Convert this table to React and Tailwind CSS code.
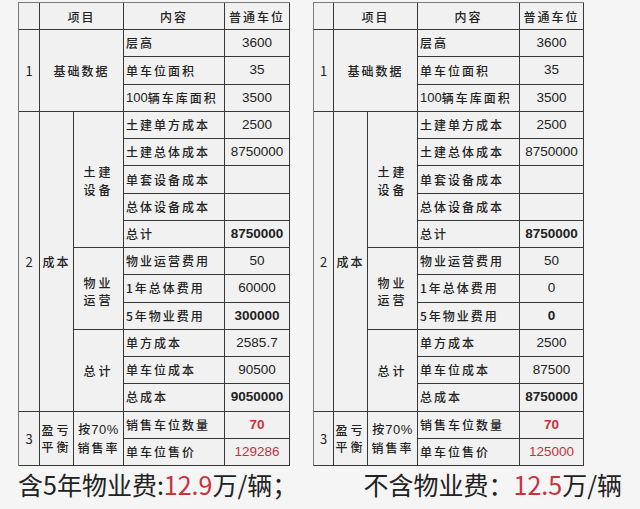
import React from "react";

const CJK = "font-['Noto_Sans_CJK_SC','Noto_Sans',sans-serif]";
const NUM = "font-['Liberation_Sans',Arial,sans-serif]";

function Cell({ children, className = "" }) {
  return (
    <div
      className={`border-r border-b border-[#383838] flex items-center overflow-hidden whitespace-nowrap ${className}`}
    >
      {children}
    </div>
  );
}

function Label({ text, className = "" }) {
  return (
    <Cell className={`pl-[2px] text-[12px] font-medium tracking-[2px] text-[#222] ${CJK} ${className}`}>
      {text}
    </Cell>
  );
}

function Val({ v, bold, red }) {
  return (
    <Cell
      className={`justify-center text-[13.5px] ${NUM} ${bold ? "font-bold" : ""} ${
        red ? "text-[#c92f3b]" : "text-[#222]"
      }`}
    >
      {v}
    </Cell>
  );
}

function Center({ children, className = "" }) {
  return (
    <Cell className={`justify-center text-[12px] font-medium text-[#222] leading-[17px] ${CJK} ${className}`}>
      {children}
    </Cell>
  );
}

function Stack({ a, b }) {
  return (
    <div className="flex flex-col items-center">
      <span className="block leading-[17.5px]">{a}</span>
      <span className="block leading-[17.5px]">{b}</span>
    </div>
  );
}

function Table({ cols, v }) {
  return (
    <div
      className={`grid h-[464px] grid-rows-[repeat(17,minmax(0,1fr))] border-l border-t border-[#7a7a7a] bg-[#f1f1f1] ${cols}`}
    >
      {/* header */}
      <Cell />
      <Center className="col-span-2 tracking-[2px]">项目</Center>
      <Center className="tracking-[2px]">内容</Center>
      <Center className="tracking-[2px]">普通车位</Center>

      {/* 1 基础数据 */}
      <Center className={`row-span-3 text-[13px] font-normal ${NUM}`}>1</Center>
      <Center className="col-span-2 row-span-3 tracking-[2px]">基础数据</Center>
      <Label text="层高" />
      <Val v={v[0]} />
      <Label text="单车位面积" />
      <Val v={v[1]} />
      <Label
        text={
          <>
            <span className={`${NUM} text-[13px] font-normal tracking-normal`}>100</span>辆车库面积
          </>
        }
        className="pl-0 tracking-[1.6px]"
      />
      <Val v={v[2]} />

      {/* 2 成本 */}
      <Center className={`row-span-11 text-[13px] font-normal ${NUM}`}>2</Center>
      <Center className="row-span-11 tracking-[2px]">成本</Center>
      <Center className="row-span-5 tracking-[3px] pt-[2px]">
        <Stack a="土建" b="设备" />
      </Center>
      <Label text="土建单方成本" />
      <Val v={v[3]} />
      <Label text="土建总体成本" />
      <Val v={v[4]} />
      <Label text="单套设备成本" />
      <Val v="" />
      <Label text="总体设备成本" />
      <Val v="" />
      <Label text="总计" />
      <Val v={v[5]} bold />

      <Center className="row-span-3 tracking-[3px] pt-[6px]">
        <Stack a="物业" b="运营" />
      </Center>
      <Label text="物业运营费用" />
      <Val v={v[6]} />
      <Label text="1年总体费用" className="pl-0" />
      <Val v={v[7]} />
      <Label text="5年物业费用" className="pl-0" />
      <Val v={v[8]} bold />

      <Center className="row-span-3 tracking-[3px]">总计</Center>
      <Label text="单方成本" />
      <Val v={v[9]} />
      <Label text="单车位成本" />
      <Val v={v[10]} />
      <Label text="总成本" />
      <Val v={v[11]} bold />

      {/* 3 盈亏平衡 */}
      <Center className={`row-span-2 text-[13px] font-normal ${NUM}`}>3</Center>
      <Center className="row-span-2 tracking-[3px]">
        <Stack a="盈亏" b="平衡" />
      </Center>
      <Center className="row-span-2 tracking-[1px]">
        <Stack
          a={
            <>
              按<span className={`${NUM} font-normal text-[13px] tracking-[0.5px]`}>70%</span>
            </>
          }
          b={<span className="tracking-[2px]">销售率</span>}
        />
      </Center>
      <Label text="销售车位数量" />
      <Val v={v[12]} bold red />
      <Label text="单车位售价" />
      <Val v={v[13]} red />
    </div>
  );
}

export default function App() {
  const left = [
    "3600", "35", "3500", "2500", "8750000", "8750000", "50", "60000", "300000",
    "2585.7", "90500", "9050000", "70", "129286",
  ];
  const right = [
    "3600", "35", "3500", "2500", "8750000", "8750000", "50", "0", "0",
    "2500", "87500", "8750000", "70", "125000",
  ];
  return (
    <div className="w-[640px] h-[509px] overflow-hidden bg-[#f5f5f6] flex flex-col">
      <div className="flex pt-[2px] pl-[18px] gap-[23px]">
        <div className="w-[272px]">
          <Table cols="grid-cols-[21px_34px_50px_101px_65px]" v={left} />
        </div>
        <div className="w-[271px]">
          <Table cols="grid-cols-[20px_34px_50px_102px_64px]" v={right} />
        </div>
      </div>
      <div
        className={`flex mt-[3px] px-[18px] text-[25px] leading-[30px] text-[#222] ${CJK}`}
      >
        <span>
          含5年物业费:<span className="text-[#c8323a]">12.9</span>万/辆；
        </span>
        <span className="ml-auto">
          不含物业费：<span className="text-[#c8323a]">12.5</span>万/辆
        </span>
      </div>
    </div>
  );
}
